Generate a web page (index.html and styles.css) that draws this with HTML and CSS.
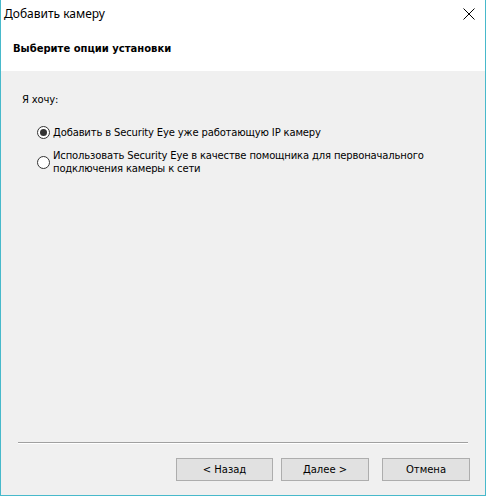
FILE: index.html
```html
<!DOCTYPE html>
<html>
<head>
<meta charset="utf-8">
<link rel="stylesheet" href="styles.css">
</head>
<body>
<div class="window">
  <div class="titlebar">
    <span class="title">Добавить камеру</span>
    <svg class="close" width="12" height="12" viewBox="0 0 12 12"><path d="M0.5 0.5 L11.5 11.5 M11.5 0.5 L0.5 11.5" stroke="#000" stroke-width="1" fill="none"/></svg>
  </div>
  <div class="header">Выберите опции установки</div>
  <div class="content">
    <div class="label">Я хочу:</div>
    <div class="options">
      <div class="option">
        <span class="radio checked"></span>
        <span class="otext">Добавить в Security Eye уже работающую IP камеру</span>
      </div>
      <div class="option">
        <span class="radio"></span>
        <span class="otext">Использовать Security Eye в качестве помощника для первоначального<br>подключения камеры к сети</span>
      </div>
    </div>
  </div>
  <div class="footer">
    <div class="sep"></div>
    <div class="buttons">
      <button class="btn wide">&lt; Назад</button>
      <button class="btn next">Далее &gt;</button>
      <button class="btn cancel">Отмена</button>
    </div>
  </div>
</div>
</body>
</html>
```
FILE: styles.css
```css
html, body {
  margin: 0;
  padding: 0;
}
.window {
  width: 486px;
  height: 496px;
  box-sizing: border-box;
  border-left: 1px solid #47b9cb;
  border-right: 1px solid #47b9cb;
  border-bottom: 1px solid #47b9cb;
  background: #f0f0f0;
  display: flex;
  flex-direction: column;
  font-family: "DejaVu Sans", sans-serif;
  color: #000;
}
.titlebar {
  height: 30px;
  background: #fff;
  display: flex;
  align-items: center;
  justify-content: space-between;
  padding: 0 10px 0 3px;
}
.title {
  font-family: "Noto Sans", "Open Sans", sans-serif;
  font-size: 12px;
  line-height: 16px;
  margin-top: -3px;
}
.close {
  margin-top: -3px;
}
.header {
  height: 41px;
  background: #fff;
  box-sizing: border-box;
  padding: 12px 0 0 12px;
  font-family: "DejaVu Sans", sans-serif;
  font-weight: bold;
  font-size: 10px;
  line-height: 14px;
}
.content {
  flex: 1;
  padding: 22px 0 0 21px;
  font-size: 10px;
  letter-spacing: -0.15px;
}
.label {
  line-height: 14px;
}
.options {
  margin-top: 19px;
  padding-left: 15px;
  display: flex;
  flex-direction: column;
  gap: 10px;
}
.option {
  display: flex;
  align-items: center;
  gap: 3px;
}
.otext {
  line-height: 13px;
}
.radio {
  width: 13px;
  height: 13px;
  box-sizing: border-box;
  border: 1px solid #333;
  border-radius: 50%;
  background: #fff;
  display: flex;
  align-items: center;
  justify-content: center;
  flex: none;
}
.radio.checked::after {
  content: "";
  width: 7px;
  height: 7px;
  border-radius: 50%;
  background: #333;
}
.footer {
  display: flex;
  flex-direction: column;
}
.sep {
  margin: 0 17px;
  height: 1px;
  background: #a0a0a0;
  border-bottom: 1px solid #fff;
}
.buttons {
  display: flex;
  justify-content: flex-end;
  padding: 14px 15px 14px 0;
}
.btn {
  height: 23px;
  box-sizing: border-box;
  background: #e1e1e1;
  border: 1px solid #adadad;
  font-family: "DejaVu Sans", sans-serif;
  font-size: 10px;
  color: #000;
  padding: 0;
  margin: 0;
}
.btn.wide { width: 97px; }
.btn.next { width: 88px; margin-left: 8px; }
.btn.cancel { width: 88px; margin-left: 13px; }
```
